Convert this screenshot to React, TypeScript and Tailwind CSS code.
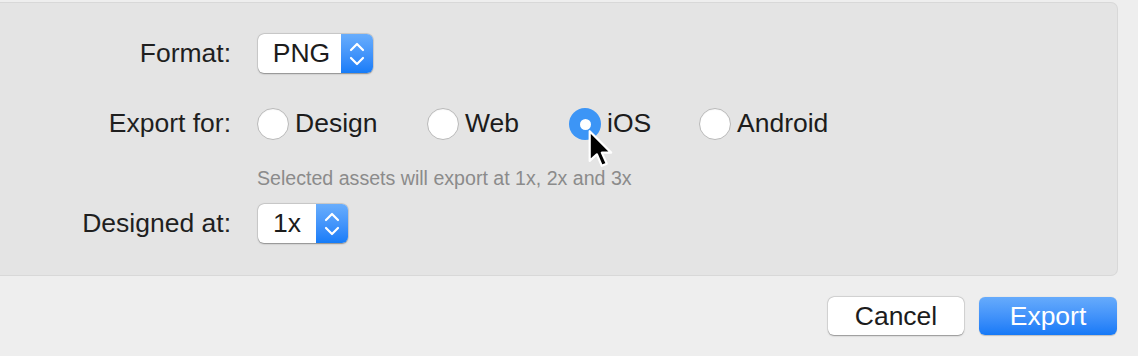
import React from 'react'

const font = { fontFamily: '"Liberation Sans", Arial, sans-serif' }

const Chevrons: React.FC = () => (
  <svg width="16" height="26" viewBox="0 0 16 26" fill="none" stroke="white" strokeWidth="2.2" strokeLinecap="round" strokeLinejoin="round">
    <path d="M2 9 L8 3 L14 9" />
    <path d="M2 17 L8 23 L14 17" />
  </svg>
)

interface SelectProps {
  value: string
  width: string
  textPad: string
}

const PopUp: React.FC<SelectProps> = ({ value, width, textPad }) => (
  <div className={`flex h-[39px] ${width} rounded-[6px] bg-white shadow-[0_0.5px_1.5px_rgba(0,0,0,0.35),0_0_0_0.5px_rgba(0,0,0,0.12)]`}>
    <div className={`flex flex-1 items-center justify-center ${textPad} text-[26.5px] text-[#1c1c1c]`}>{value}</div>
    <div className="flex w-[32px] items-center justify-center rounded-r-[6px] bg-gradient-to-b from-[#68adfc] to-[#157cf8]">
      <Chevrons />
    </div>
  </div>
)

interface RadioProps {
  label: string
  checked?: boolean
  width: string
}

const Radio: React.FC<RadioProps> = ({ label, checked, width }) => (
  <div className={`flex items-center gap-[6px] ${width}`}>
    {checked ? (
      <div className="flex h-[32px] w-[32px] items-center justify-center rounded-full bg-[#3c95f6]">
        <div className="h-[11px] w-[11px] rounded-full bg-white" />
      </div>
    ) : (
      <div className="h-[32px] w-[32px] rounded-full border border-[#b9b9b9] bg-white shadow-[inset_0_1px_1px_rgba(0,0,0,0.04)]" />
    )}
    <span className="text-[26.5px] text-[#1c1c1c]">{label}</span>
  </div>
)

const Cursor: React.FC = () => (
  <svg className="absolute left-[587px] top-[129px]" width="34" height="44" viewBox="0 0 30 40">
    <path
      d="M2 2 L2 29 L8.5 23 L13 33.5 L17.5 31.5 L13 21.5 L21.5 21.5 Z"
      fill="black"
      stroke="white"
      strokeWidth="2"
      strokeLinejoin="round"
    />
  </svg>
)

export default function App() {
  return (
    <div className="relative h-[356px] w-[1138px] overflow-hidden bg-[#eeeeee]" style={font}>
      <div className="mt-[2px] mr-[20px] h-[274px] rounded-r-[7px] border-y border-r border-[#d8d8d8] bg-[#e4e4e4]">
        <div className="grid grid-cols-[231px_1fr] gap-x-[26px] pt-[31px]">
          <div className="flex h-[39px] items-center justify-end text-[26.5px] text-[#1f1f1f]">Format:</div>
          <div className="flex items-center pl-[1px]">
            <PopUp value="PNG" width="w-[115px]" textPad="pl-[4px]" />
          </div>

          <div className="mt-[35px] flex h-[32px] items-center justify-end text-[26.5px] text-[#1f1f1f]">Export for:</div>
          <div className="mt-[35px] flex h-[32px] items-center">
            <Radio label="Design" width="w-[170px]" />
            <Radio label="Web" width="w-[142px]" />
            <Radio label="iOS" checked width="w-[130px]" />
            <Radio label="Android" width="w-[140px]" />
          </div>

          <div />
          <div className="mt-[26px] h-[24px] text-[19.6px] leading-[24px] text-[#8b8b8b]">
            Selected assets will export at 1x, 2x and 3x
          </div>

          <div className="mt-[14px] flex h-[39px] items-center justify-end text-[26.5px] text-[#1f1f1f]">Designed at:</div>
          <div className="mt-[14px] flex items-center pl-[1px]">
            <PopUp value="1x" width="w-[90px]" textPad="" />
          </div>
        </div>
      </div>

      <div className="mt-[21px] flex justify-end gap-[15px] pr-[21px]">
        <button className="h-[38px] w-[136px] rounded-[6px] bg-white text-[26.5px] text-[#1c1c1c] shadow-[0_0.5px_1.5px_rgba(0,0,0,0.35),0_0_0_0.5px_rgba(0,0,0,0.12)]">
          Cancel
        </button>
        <button className="h-[38px] w-[138px] rounded-[6px] bg-gradient-to-b from-[#66abfc] to-[#1479f7] text-[26.5px] text-white shadow-[0_0.5px_1px_rgba(0,0,0,0.2)]">
          Export
        </button>
      </div>

      <Cursor />
    </div>
  )
}
